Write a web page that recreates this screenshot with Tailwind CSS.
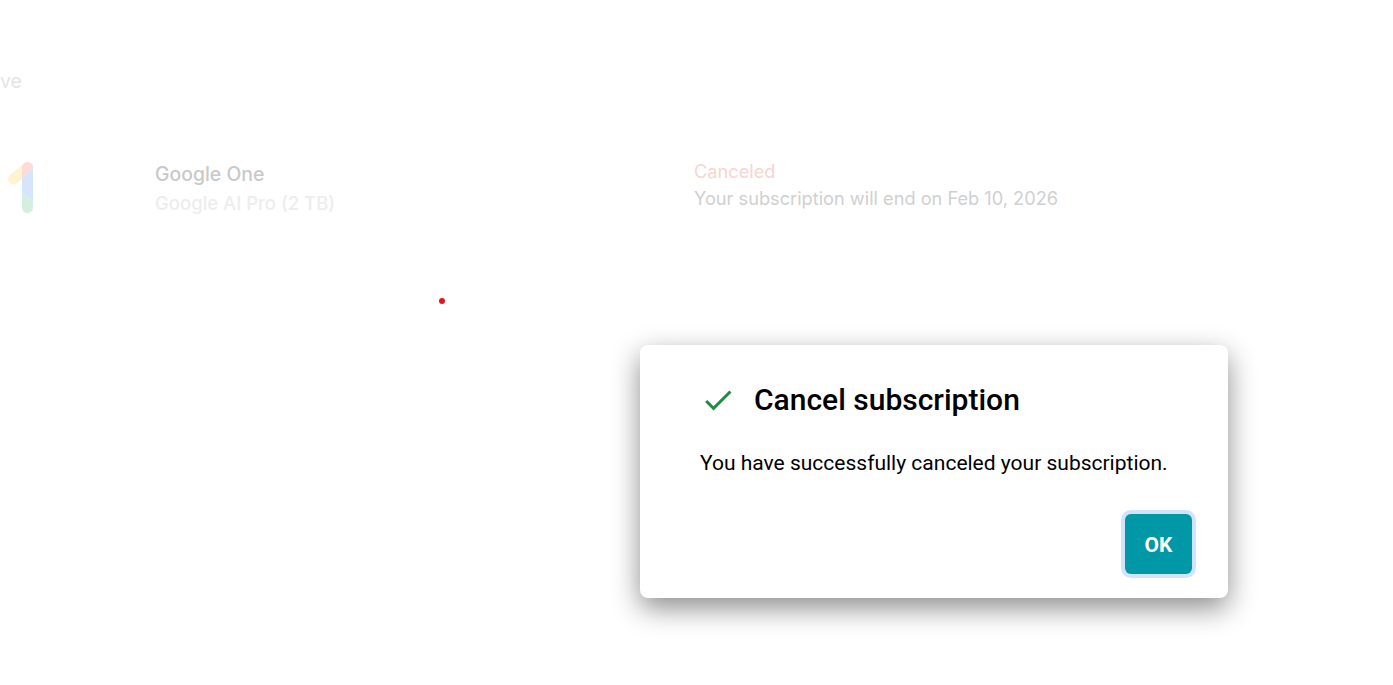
<!DOCTYPE html>
<html lang="en">
<head>
<meta charset="utf-8"/>
<meta content="width=device-width, initial-scale=1.0" name="viewport"/>
<title>Cancel subscription</title>
<script src="https://cdn.jsdelivr.net/npm/@tailwindcss/browser@4"></script>
</head>
<body class="bg-white h-[685px] overflow-hidden relative font-['Inter',sans-serif]">
<!-- page behind the dialog -->
<main class="h-full">
  <p class="pt-[69px] text-[19.5px] leading-[24px] text-[#e4e4e4]">ve</p>
  <section class="mt-[69px] flex items-start">
    <svg class="w-[155px] h-[60px] shrink-0" viewBox="0 0 155 60" fill="none">
      <path d="M13.5 17 L27.5 5.5" stroke="#fef3d3" stroke-width="11" stroke-linecap="round"/>
      <path d="M22 5.5a5.5 5.5 0 0 1 11 0V6L22 17z" fill="#fbdcd9"/>
      <path d="M22 17 33 6V40L22 31z" fill="#d6e5fb"/>
      <path d="M22 31 33 40V45.5a5.5 5.5 0 0 1-11 0z" fill="#d5eedd"/>
    </svg>
    <div class="w-[539px] shrink-0 -mt-[2px] leading-[29px] font-medium">
      <p class="text-[19.4px] text-[#c9c9c9]">Google One</p>
      <p class="text-[18.5px] text-[#ededed]">Google AI Pro (2 TB)</p>
    </div>
    <div class="text-[18.2px] leading-[27px] -mt-[4px]">
      <p class="text-[#f6d5d3]">Canceled</p>
      <p class="text-[#d0d0d0]">Your subscription will end on Feb 10, 2026</p>
    </div>
  </section>
</main>
<span class="absolute left-[439px] top-[298px] w-[6px] h-[6px] rounded-full bg-[#e8141c]"></span>
<!-- dialog -->
<div class="absolute left-[640px] top-[345px] w-[588px] h-[253px] bg-white rounded-[8px] shadow-[0_10px_28px_rgba(0,0,0,0.45)] pl-[60px] pr-[36px] font-['Roboto',sans-serif] text-black flex flex-col">
  <div class="flex items-center h-[54px] mt-[28px]">
    <svg class="w-[36px] h-[36px] shrink-0" viewBox="0 0 24 24" fill="#1e8e3e">
      <path d="M9 16.17L4.83 12l-1.42 1.41L9 19 21 7l-1.41-1.41z"/>
    </svg>
    <h2 class="ml-[18px] text-[30px] leading-[36px] font-medium">Cancel subscription</h2>
  </div>
  <p class="mt-[24px] text-[21px] leading-[24px]">You have successfully canceled your subscription.</p>
  <div class="flex justify-end mt-[39px]">
    <button class="w-[67px] h-[60px] pt-[3px] bg-[#0097a7] text-white text-[21px] font-bold rounded-[6px] ring-4 ring-[#d3e3fd]">OK</button>
  </div>
</div>
</body>
</html>
